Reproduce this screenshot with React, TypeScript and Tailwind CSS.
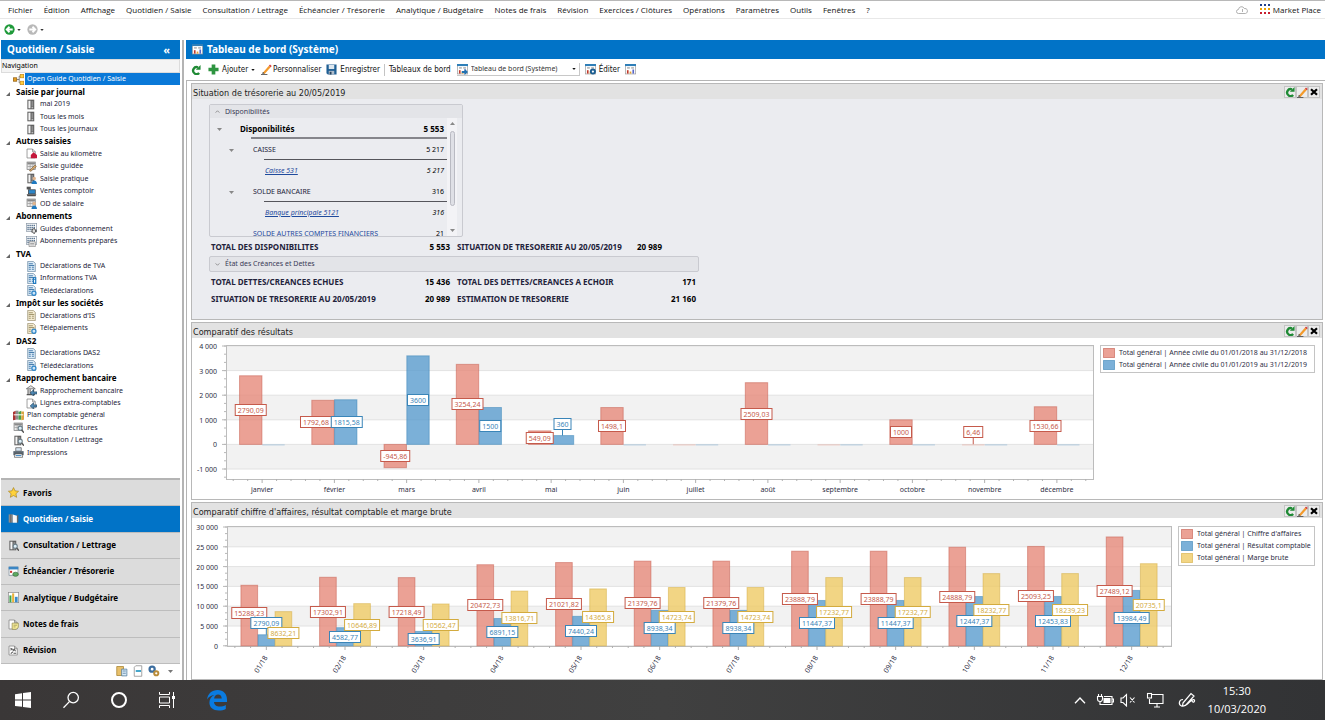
import type { ReactNode } from "react";
import { clsx } from "clsx";

const MENU = [
  "Fichier",
  "Édition",
  "Affichage",
  "Quotidien / Saisie",
  "Consultation / Lettrage",
  "Échéancier / Trésorerie",
  "Analytique / Budgétaire",
  "Notes de frais",
  "Révision",
  "Exercices / Clôtures",
  "Opérations",
  "Paramètres",
  "Outils",
  "Fenêtres",
  "?",
];

type Base = "guide" | "binder" | "page" | "form" | "grid" | "doc" | "docTan" | "bank" | "pc" | "books" | "printer" | "star" | "chart" | "open" | "calendar";
type Badge = "house" | "pencil" | "user" | "gear" | "sheet" | "info" | "sync" | "arrow" | "search" | "note" | "scribble";

type Row = { label: string; kind: "head" | "leaf" | "root"; base?: Base; badge?: Badge; active?: boolean };

const TREE: Row[] = [
  { label: "Open Guide Quotidien / Saisie", kind: "root", base: "guide", active: true },
  { label: "Saisie par journal", kind: "head" },
  { label: "mai 2019", kind: "leaf", base: "binder" },
  { label: "Tous les mois", kind: "leaf", base: "binder" },
  { label: "Tous les journaux", kind: "leaf", base: "binder" },
  { label: "Autres saisies", kind: "head" },
  { label: "Saisie au kilomètre", kind: "leaf", base: "page", badge: "house" },
  { label: "Saisie guidée", kind: "leaf", base: "form", badge: "pencil" },
  { label: "Saisie pratique", kind: "leaf", base: "binder", badge: "user" },
  { label: "Ventes comptoir", kind: "leaf", base: "pc" },
  { label: "OD de salaire", kind: "leaf", base: "form", badge: "user" },
  { label: "Abonnements", kind: "head" },
  { label: "Guides d'abonnement", kind: "leaf", base: "grid", badge: "gear" },
  { label: "Abonnements préparés", kind: "leaf", base: "grid", badge: "sheet" },
  { label: "TVA", kind: "head" },
  { label: "Déclarations de TVA", kind: "leaf", base: "doc" },
  { label: "Informations TVA", kind: "leaf", base: "doc", badge: "info" },
  { label: "Télédéclarations", kind: "leaf", base: "doc", badge: "sync" },
  { label: "Impôt sur les sociétés", kind: "head" },
  { label: "Déclarations d'IS", kind: "leaf", base: "docTan" },
  { label: "Télépaiements", kind: "leaf", base: "docTan", badge: "sync" },
  { label: "DAS2", kind: "head" },
  { label: "Déclarations DAS2", kind: "leaf", base: "doc" },
  { label: "Télédéclarations", kind: "leaf", base: "doc", badge: "sync" },
  { label: "Rapprochement bancaire", kind: "head" },
  { label: "Rapprochement bancaire", kind: "leaf", base: "bank", badge: "arrow" },
  { label: "Lignes extra-comptables", kind: "leaf", base: "page", badge: "arrow" },
  { label: "Plan comptable général", kind: "root", base: "books" },
  { label: "Recherche d'écritures", kind: "root", base: "form", badge: "search" },
  { label: "Consultation / Lettrage", kind: "root", base: "binder", badge: "search" },
  { label: "Impressions", kind: "root", base: "printer" },
];

const MODULES: { label: string; base: Base; badge?: Badge; active?: boolean }[] = [
  { label: "Favoris", base: "star" },
  { label: "Quotidien / Saisie", base: "open", active: true },
  { label: "Consultation / Lettrage", base: "binder", badge: "search" },
  { label: "Échéancier / Trésorerie", base: "calendar" },
  { label: "Analytique / Budgétaire", base: "chart" },
  { label: "Notes de frais", base: "page", badge: "note" },
  { label: "Révision", base: "page", badge: "scribble" },
];

const BASES: Record<Base, ReactNode> = {
  guide: (
    <>
      <path d="M5 8h4M9 3v10M9 3h2M9 13h2" stroke="#555" fill="none" />
      <rect x="0.5" y="5.5" width="5" height="5" fill="#e8a020" stroke="#8a5a10" />
      <rect x="10.5" y="0.5" width="5" height="5" fill="#ffcf3a" stroke="#c98a14" />
      <rect x="10.5" y="10.5" width="5" height="5" fill="#ffcf3a" stroke="#c98a14" />
    </>
  ),
  binder: (
    <>
      <rect x="2" y="1" width="10" height="14" fill="#606060" />
      <rect x="3.5" y="2.5" width="3" height="11" fill="#f4f4f4" />
      <rect x="8" y="3" width="2.5" height="8" fill="#8e8e8e" />
      <rect x="8" y="12" width="2.5" height="1.5" fill="#d5d5d5" />
    </>
  ),
  page: <path d="M1.5 1.5h8l4 4v9h-12zM9.5 1.5v4h4" fill="#fff" stroke="#777" />,
  form: (
    <>
      <rect x="1.5" y="1.5" width="12" height="11" fill="#e9e9e9" stroke="#777" />
      <rect x="2" y="2" width="11" height="3" fill="#8a8a8a" />
      <path d="M2 8h11M6 5v7M10 5v7" stroke="#999" />
    </>
  ),
  grid: (
    <>
      <rect x="0.5" y="0.5" width="15" height="12" fill="#fff" stroke="#8a97a5" />
      <path d="M2 3.5h12M2 6.5h12M2 9.5h12" stroke="#4f6c8a" strokeWidth="2" strokeDasharray="2 1" />
    </>
  ),
  doc: (
    <>
      <path d="M2.5 0.5h8l3 3v12h-11z" fill="#dcebf7" stroke="#5f7f9b" />
      <path d="M4 4h6M4 6.5h8M4 9h3M8.5 9h3M4 12h3M8.5 12h3" stroke="#4a7fae" strokeWidth="1.6" />
    </>
  ),
  docTan: (
    <>
      <path d="M2.5 0.5h8l3 3v12h-11z" fill="#f5ecd2" stroke="#8f8466" />
      <path d="M4 4h6M4 6.5h8M4 9h3M8.5 9h3M4 12h3M8.5 12h3" stroke="#a4976f" strokeWidth="1.6" />
    </>
  ),
  bank: (
    <>
      <path d="M0.5 5.5L7 1l6.5 4.5z" fill="#e4e4e4" stroke="#555" />
      <path d="M3 6v7M6 6v7M11 6v7M1 14h12" stroke="#555" strokeWidth="1.5" />
    </>
  ),
  pc: (
    <>
      <path d="M1 1h6v4H1z" fill="#555" />
      <rect x="3.5" y="5.5" width="10" height="6" fill="#2d86c8" stroke="#3a3a3a" />
      <path d="M1 12h14l-1 3H2z" fill="#4c4c4c" />
    </>
  ),
  books: (
    <>
      <path d="M0 3l4-2v13l-4 1z" fill="#a33" />
      <path d="M4 1h4v13H4z" fill="#8c8c8c" />
      <path d="M8 3l4-2v13H8z" fill="#4aa04a" />
      <path d="M12 2h4v12l-4 1z" fill="#d9a441" />
      <path d="M1 7h14" stroke="#fff" strokeWidth="1.5" />
    </>
  ),
  printer: (
    <>
      <path d="M4 1h8v5H4z" fill="#d7e6f3" stroke="#555" />
      <path d="M0.5 6h15v6h-15z" fill="#5a6670" />
      <path d="M3 10h10l1 5H2z" fill="#fff" stroke="#555" />
      <path d="M4 12.5h8" stroke="#3b86c4" strokeWidth="1.5" />
    </>
  ),
  star: <path d="M8 0.8l2.2 4.8 5.2.6-3.9 3.6 1.1 5.2L8 12.4 3.4 15l1.1-5.2L.6 6.2l5.2-.6z" fill="#ffd23b" stroke="#a88425" />,
  chart: (
    <>
      <rect x="0.5" y="0.5" width="15" height="15" fill="#fff" stroke="#888" />
      <rect x="2" y="5" width="3" height="10" fill="#3fa34d" />
      <rect x="6" y="2" width="3" height="13" fill="#e9b13a" />
      <rect x="10" y="7" width="4" height="8" fill="#3a8ccb" />
    </>
  ),
  open: (
    <>
      <path d="M1 2h6v12H1z" fill="#8b8b8b" />
      <path d="M7 2l6 2v10H7z" fill="#f7f7f7" />
      <path d="M4 2v12" stroke="#555" />
      <path d="M13 3h2v11h-2z" fill="#666" />
    </>
  ),
  calendar: (
    <>
      <rect x="1.5" y="1.5" width="13" height="12" fill="#fff" stroke="#7a8b99" />
      <rect x="1" y="1" width="14" height="4" fill="#3b86c4" />
      <rect x="3" y="7" width="3" height="3" fill="#c33" />
      <ellipse cx="11" cy="12" rx="4" ry="3" fill="#5eaa62" stroke="#3b6e3e" />
    </>
  ),
};

const BADGES: Record<Badge, ReactNode> = {
  house: <path d="M7 15V10l4-4 5 4v5z" fill="#c4183c" />,
  pencil: <path d="M5 14l8-8 2 2-8 7z" fill="#e0b070" stroke="#7a5a35" />,
  user: (
    <>
      <circle cx="12" cy="8" r="2.4" fill="#e0b48c" />
      <path d="M8 16c0-7 8-7 8 0z" fill="#1f7ac0" />
    </>
  ),
  gear: <circle cx="11.5" cy="11.5" r="3" fill="#ddd" stroke="#444" strokeWidth="2" strokeDasharray="2 1" />,
  sheet: <path d="M4.5 8.5h9v7h-9zM6 11h6M6 13h6" fill="#fff" stroke="#777" />,
  info: (
    <>
      <path d="M10 6h5v10h-5z" fill="#1f7ac0" />
      <path d="M12.5 7.5v1.5M12.5 10v4" stroke="#fff" strokeWidth="1.5" />
    </>
  ),
  sync: <circle cx="11.5" cy="12" r="3" fill="#cfe6f8" stroke="#2f86c8" strokeWidth="1.8" />,
  arrow: <path d="M16 10h-5V7l-5 4.5L11 16v-3h5z" fill="#4f89b5" stroke="#2a4d68" />,
  search: (
    <>
      <circle cx="10.5" cy="9" r="3" fill="#dff0f8" stroke="#6d7f89" strokeWidth="1.5" />
      <path d="M12.5 11.5L16 15.5" stroke="#555" strokeWidth="2.2" />
    </>
  ),
  note: (
    <>
      <path d="M6 6h9v6l-3 3H6z" fill="#f6ec9a" stroke="#8d8647" />
      <path d="M8 9h5M8 11.5h3" stroke="#8d8647" />
    </>
  ),
  scribble: <path d="M3.500 4.500l3 1.500-3 1.500M7 9l2-3 2 3M4 12.500l3-2.500M8 12h4" fill="none" stroke="#555" strokeWidth="1.500" />,
};

function Glyph({ base, badge }: { base: Base; badge?: Badge }) {
  return (
    <svg viewBox="0 0 16 16" className="h-[11px] w-[11px] shrink-0" aria-hidden="true">
      {BASES[base]}
      {badge && BADGES[badge]}
    </svg>
  );
}

function Caret({ className = "h-[3px] w-[5px]" }: { className?: string }) {
  return (
    <svg viewBox="0 0 5 3" className={clsx("shrink-0", className)} aria-hidden="true">
      <path d="M0 0h5L2.5 3z" fill="currentColor" />
    </svg>
  );
}

function RefreshIcon() {
  return (
    <svg viewBox="0 0 12 12" className="h-[10px] w-[10px]" aria-hidden="true">
      <path d="M9.8 9.6A4.200 4.200 0 1 1 8.400 2.800" fill="none" stroke="#1f8a35" strokeWidth="2.800" />
      <path d="M5.800 5.800H11.500V0z" fill="#1f8a35" />
    </svg>
  );
}

function PencilIcon() {
  return (
    <svg viewBox="0 0 12 12" className="h-[11px] w-[11px]" aria-hidden="true">
      <path d="M2 9.600L8.600 2l1.900 1.600L3.900 11z" fill="#f39a2b" />
      <path d="M8.600 2l1.200-1.400 1.900 1.600-1.200 1.400z" fill="#d63b3b" />
      <path d="M1.400 11l.6-2.400 1.900 1.600z" fill="#333" />
      <path d="M0 11.500h7" stroke="#555" />
    </svg>
  );
}

function DashIcon({ overlay }: { overlay?: "arrow" | "gear" }) {
  return (
    <svg viewBox="0 0 16 16" className="h-[11px] w-[11px] shrink-0" aria-hidden="true">
      <rect x="0.5" y="0.5" width="15" height="14" fill="#fff" stroke="#9a9a9a" />
      <rect x="0" y="0" width="16" height="3" fill="#2f7fb8" />
      <path d="M3 5.500h4M9 5.500h4" stroke="#bbb" strokeWidth="2.500" />
      <path d="M4 14V9" stroke="#c0392b" strokeWidth="2.400" />
      <path d="M8 14v-3" stroke="#e0a030" strokeWidth="2.400" />
      <path d="M12 14V8" stroke="#5866c8" strokeWidth="2.400" />
      {overlay === "arrow" && <path d="M7 10h4V7l5 4.500-5 4.500v-3H7z" fill="#2372b0" />}
      {overlay === "gear" && <circle cx="11.500" cy="11" r="3" fill="#fff" stroke="#1d5f93" strokeWidth="2.800" />}
    </svg>
  );
}

function MenuBar() {
  return (
    <nav className="flex h-[19px] items-center border-t border-b border-t-[#b8b8b8] border-b-[#e8e8e8] pr-1 pl-2 font-['Open_Sans',sans-serif] text-[8px] leading-3 text-[#111]">
      <ul className="flex flex-1 gap-[11px]">
        {MENU.map((m) => (
          <li key={m}>
            <button className="whitespace-nowrap">{m}</button>
          </li>
        ))}
      </ul>
      <svg viewBox="0 0 24 16" className="mr-3 h-2 w-3" fill="none" stroke="#a8a8a8" strokeWidth="1.8" aria-hidden="true">
        <path d="M5 15a4 4 0 0 1 0-8 6 6 0 0 1 11.5-2A5 5 0 0 1 19 15zM13 6v6" />
      </svg>
      <button className="flex items-center gap-[2px]">
        <svg viewBox="0 0 11 11" className="h-[11px] w-[11px]" aria-hidden="true">
          {["#1f3f8c", "#f0a500", "#c81e2e"].map((c, y) =>
            [0, 4, 8].map((x) => <rect key={x} x={x} y={y * 4} width="2" height="2" fill={c} />),
          )}
        </svg>
        Market Place
      </button>
    </nav>
  );
}

function HistoryBar() {
  return (
    <div className="flex h-[21px] items-center gap-[6px] pl-1">
      {["#1f9a3a", "#b9b9b9"].map((c, i) => (
        <button key={c} className="flex items-center gap-[2px] text-[#333]" aria-label={i ? "Suivant" : "Précédent"}>
          <svg viewBox="0 0 12 12" className="h-[11px] w-[11px]" aria-hidden="true">
            <circle cx="6" cy="6" r="5.6" fill={c} />
            <path d={i ? "M2.5 6h6M6 3l3 3-3 3" : "M9.5 6h-6M6 3L3 6l3 3"} fill="none" stroke="#fff" strokeWidth="2" />
          </svg>
          <Caret className="h-[2px] w-1" />
        </button>
      ))}
    </div>
  );
}

function TreeRow({ row }: { row: Row }) {
  if (row.kind === "head") {
    return (
      <li className="flex flex-1 items-center gap-[6px] pl-[5px] text-[8px] font-bold text-black">
        <svg viewBox="0 0 4 4" className="mt-1 h-1 w-1" aria-hidden="true">
          <path d="M4 0v4H0z" fill="#666" />
        </svg>
        {row.label}
      </li>
    );
  }
  return (
    <li className={clsx("flex flex-1 items-center gap-px", row.kind === "leaf" ? "pl-[25px]" : "pl-3")}>
      <Glyph base={row.base!} badge={row.badge} />
      <a href="#" className={clsx("flex items-center self-stretch pl-[2px]", row.active && "flex-1 bg-[#0a79d8] text-white")}>
        {row.label}
      </a>
    </li>
  );
}

function Sidebar() {
  return (
    <aside className="flex w-[184px] shrink-0 flex-col border-r-2 border-[#b4b4b4] pr-[2px] pl-px">
      <header className="flex h-[19px] items-center justify-between bg-[#0173c7] pr-[10px] pl-[6px] text-[10px] font-bold text-white">
        Quotidien / Saisie
        <button className="text-[11px] leading-3" aria-label="Replier">
          «
        </button>
      </header>
      <div className="flex h-[14px] items-center border border-[#dcdcdc] bg-[#f4f4f4] text-[7px]">Navigation</div>
      <ul className="flex h-[386px] flex-col text-[7px] leading-3 whitespace-nowrap text-[#1c1c38]">
        {TREE.map((r, i) => (
          <TreeRow key={i} row={r} />
        ))}
      </ul>
      <div className="flex-1" />
      <ul className="grid h-[186px] grid-rows-7 border-t-2 border-[#b4b4b4] text-[8px] font-bold">
        {MODULES.map((m) => (
          <li key={m.label} className={clsx("border-b border-[#bdbdbd]", m.active ? "bg-[#0173c7] text-white" : "bg-[#dcdcdc] text-black")}>
            <button className="flex h-full w-full items-center gap-1 pl-[7px]">
              <Glyph base={m.base} badge={m.badge} />
              {m.label}
            </button>
          </li>
        ))}
      </ul>
      <div className="flex h-4 items-center justify-end gap-1 pr-[7px] pb-[2px] text-[#777]">
        <button aria-label="Classeur">
          <svg viewBox="0 0 16 16" className="h-3 w-3" aria-hidden="true">
            <path d="M1 2h9v12H1z" fill="#e8c06a" stroke="#a5812f" />
            <path d="M7.5 5.5h7v9h-7z" fill="#d9ebf8" stroke="#4d7899" />
            <path d="M9 8h4M9 11h4" stroke="#4d7899" />
          </svg>
        </button>
        <button aria-label="Document">
          <svg viewBox="0 0 16 16" className="h-3 w-3" aria-hidden="true">
            <path d="M5 1h8v14H3V3z" fill="#fff" stroke="#888" />
            <path d="M5 8h7" stroke="#39a0c8" strokeWidth="2.5" />
          </svg>
        </button>
        <button aria-label="Réglages">
          <svg viewBox="0 0 16 16" className="h-3 w-3" aria-hidden="true">
            <circle cx="5.5" cy="5.5" r="3.4" fill="#fff" stroke="#3c6ea0" strokeWidth="3" />
            <circle cx="11" cy="11" r="2.8" fill="#fff" stroke="#b98c3a" strokeWidth="2.6" />
          </svg>
        </button>
        <Caret className="ml-1 h-[3px] w-[5px]" />
      </div>
    </aside>
  );
}

function Toolbar() {
  return (
    <div className="flex h-[22px] items-center border-b border-[#b4b4b4] pl-[5px] font-['DejaVu_Sans_Condensed',sans-serif] text-[8px] whitespace-nowrap text-[#111]">
      <button aria-label="Actualiser" className="mr-[7px]">
        <RefreshIcon />
      </button>
      <button className="mr-[6px] flex items-center gap-[3px]">
        <svg viewBox="0 0 12 12" className="h-[11px] w-[11px]" aria-hidden="true">
          <path d="M4 0.5h4V4h3.5v4H8v3.5H4V8H.5V4H4z" fill="#2e9440" />
        </svg>
        Ajouter
        <Caret className="h-[2px] w-1" />
      </button>
      <button className="mr-[5px] flex items-center gap-px">
        <PencilIcon />
        Personnaliser
      </button>
      <button className="flex items-center gap-[3px]">
        <svg viewBox="0 0 12 12" className="h-[11px] w-[11px]" aria-hidden="true">
          <path d="M.5.5h11v11H2L.5 10z" fill="#1f5f94" />
          <rect x="3" y="1" width="6" height="4.5" fill="#dfe8ef" />
          <rect x="3" y="7.5" width="6" height="4" fill="#aebccb" />
          <rect x="4" y="8.5" width="2" height="3" fill="#26425c" />
        </svg>
        Enregistrer
      </button>
      <span className="mx-1 h-3 w-px bg-[#c4c4c4]" />
      <label htmlFor="board">Tableaux de bord</label>
      <div className="relative ml-[6px] flex h-[13px] items-center border-r border-b border-[#c8c8c8]">
        <DashIcon overlay="arrow" />
        <select id="board" className="w-[111px] appearance-none bg-transparent pl-[3px] font-['Noto_Sans',sans-serif] text-[7px] text-[#333]">
          <option>Tableau de bord (Système)</option>
        </select>
        <Caret className="pointer-events-none absolute right-[3px] h-[2px] w-1" />
      </div>
      <button className="ml-[5px] flex items-center gap-[3px]">
        <DashIcon overlay="gear" />
        Éditer
      </button>
      <button aria-label="Aperçu" className="ml-[5px]">
        <DashIcon />
      </button>
    </div>
  );
}

function Panel({ title, className, children }: { title: string; className?: string; children: ReactNode }) {
  return (
    <section className={clsx("flex flex-col border border-[#b8b8b8]", className)}>
      <header className="flex h-[15px] shrink-0 items-center justify-between bg-[#e2e2e2] pr-[2px] pl-px">
        <h2 className="mt-[2px] font-['DejaVu_Sans_Condensed',sans-serif] text-[9px] leading-3 text-[#222]">{title}</h2>
        <div className="flex">
          {[
            ["Actualiser", <RefreshIcon key="r" />],
            ["Modifier", <PencilIcon key="p" />],
            [
              "Fermer",
              <svg key="c" viewBox="0 0 8 8" className="h-2 w-2" aria-hidden="true">
                <path d="M1 1.2l6 5.6M7 1.2L1 6.8" stroke="#000" strokeWidth="2.2" />
              </svg>,
            ],
          ].map(([label, icon]) => (
            <button key={label as string} aria-label={label as string} className="grid h-3 w-3 place-items-center border border-[#c4c4c4] bg-[#ececec]">
              {icon}
            </button>
          ))}
        </div>
      </header>
      {children}
    </section>
  );
}

const ACCOUNTS = [
  { label: "Disponibilités", amount: "5 553", cls: "font-bold text-[8px] text-black pl-[30px]", caret: "left-[7px]", line: "left-[41px] border-b-2 border-[#85858b]" },
  { label: "CAISSE", amount: "5 217", cls: "pl-[43px]", caret: "left-[19px]", line: "left-[54px] border-b border-[#55555b]" },
  { label: "Caisse 531", amount: "5 217", cls: "italic pl-[55px]", link: true },
  { label: "SOLDE BANCAIRE", amount: "316", cls: "pl-[43px]", caret: "left-[19px]", line: "left-[54px] border-b border-[#55555b]" },
  { label: "Banque principale 5121", amount: "316", cls: "italic pl-[55px]", link: true },
  { label: "SOLDE AUTRES COMPTES FINANCIERS", amount: "21", cls: "pl-[43px] text-[#1f4a9c]" },
];

function Treasury() {
  return (
    <div className="flex-1 bg-[#ebecf0] pt-[5px] pl-[17px] text-[7px] leading-3 text-[#22223a]">
      <div className="w-[254px] rounded-xs border border-[#c9cad0]">
        <button className="flex h-[13px] w-full items-center gap-[5px] bg-[#e3e4e8] px-[5px] text-[#3a3a56]">
          <svg viewBox="0 0 6 4" className="h-[3px] w-[5px]" fill="none" stroke="#777" aria-hidden="true">
            <path d="M0.5 3.5L3 1l2.5 2.5" />
          </svg>
          Disponibilités
        </button>
        <div className="flex h-[118px] overflow-hidden">
          <table className="w-[237px] shrink-0 self-start">
            <tbody>
              {ACCOUNTS.map((a) => (
                <tr key={a.label} className="relative h-[21px]">
                  <td className={clsx("p-0 align-middle", a.cls)}>
                    {a.caret && <Caret className={clsx("absolute top-[10px] h-[3px] w-[5px] text-[#888]", a.caret)} />}
                    {a.link ? (
                      <a href="#" className="text-[#1f4a9c] underline">
                        {a.label}
                      </a>
                    ) : (
                      a.label
                    )}
                    {a.line && <span className={clsx("absolute right-0 bottom-0", a.line)} />}
                  </td>
                  <td className={clsx("p-0 pr-[3px] text-right align-middle text-black", a.cls.includes("italic") && "italic", a.cls.includes("bold") && "text-[8px] font-bold")}>
                    {a.amount}
                  </td>
                </tr>
              ))}
            </tbody>
          </table>
          <div className="flex w-[10px] flex-col items-center bg-[#f3f3f6] py-1 text-[#888]">
            <Caret className="h-[3px] w-[5px] rotate-180" />
            <span className="mt-[6px] h-[75px] w-[5px] rounded-full border border-[#b9bac2] bg-[#dfe0e6]" />
            <Caret className="mt-auto h-[3px] w-[5px]" />
          </div>
        </div>
      </div>
      <div className="grid grid-cols-[239px_205px] gap-x-[7px] pt-1 pl-[2px] text-[8px] font-bold">
        <Total label="TOTAL DES DISPONIBILITES" value="5 553" />
        <Total label="SITUATION DE TRESORERIE AU 20/05/2019" value="20 989" />
      </div>
      <button className="mt-[3px] flex h-4 w-[490px] items-center gap-[5px] rounded-xs border border-[#c9cad0] bg-[#e3e4e8] px-[5px] text-[#3a3a56]">
        <svg viewBox="0 0 6 4" className="h-[3px] w-[5px]" fill="none" stroke="#777" aria-hidden="true">
          <path d="M0.5 0.5L3 3l2.5-2.5" />
        </svg>
        État des Créances et Dettes
      </button>
      <div className="grid grid-cols-[239px_239px] gap-x-[7px] gap-y-[5px] pt-1 pl-[2px] text-[8px] font-bold">
        <Total label="TOTAL DETTES/CREANCES ECHUES" value="15 436" />
        <Total label="TOTAL DES DETTES/CREANCES A ECHOIR" value="171" />
        <Total label="SITUATION DE TRESORERIE AU 20/05/2019" value="20 989" />
        <Total label="ESTIMATION DE TRESORERIE" value="21 160" />
      </div>
    </div>
  );
}

function Total({ label, value }: { label: string; value: string }) {
  return (
    <p className="flex justify-between whitespace-nowrap">
      <span>{label}</span>
      <span className="text-black">{value}</span>
    </p>
  );
}

const COLORS = {
  red: { fill: "#e6897b", edge: "#c55a4b" },
  blue: { fill: "#5a9cce", edge: "#3a85b8" },
  yellow: { fill: "#efca65", edge: "#d3ab3f" },
};
type Color = keyof typeof COLORS;

type Bar = { value: number; color: Color; dx?: number; dy?: number; stem?: boolean };
type Group = { name: string; bars: Bar[] };

const b = (value: number, color: Color, extra: Partial<Bar> = {}): Bar => ({ value, color, ...extra });

const RESULTS: Group[] = [
  { name: "janvier", bars: [b(2790.09, "red"), b(0, "blue")] },
  { name: "février", bars: [b(1792.68, "red", { dx: -7 }), b(1815.58, "blue", { dx: 1 })] },
  { name: "mars", bars: [b(-945.86, "red"), b(3600, "blue")] },
  { name: "avril", bars: [b(3254.24, "red"), b(1500, "blue")] },
  { name: "mai", bars: [b(549.09, "red"), b(360, "blue", { dy: -16, stem: true })] },
  { name: "juin", bars: [b(1498.1, "red"), b(0, "blue")] },
  { name: "juillet", bars: [b(0, "red"), b(0, "blue")] },
  { name: "août", bars: [b(2509.03, "red"), b(0, "blue")] },
  { name: "septembre", bars: [b(0, "red"), b(0, "blue")] },
  { name: "octobre", bars: [b(1000, "red"), b(0, "blue")] },
  { name: "novembre", bars: [b(6.46, "red", { dy: -12, stem: true }), b(0, "blue")] },
  { name: "décembre", bars: [b(1530.66, "red"), b(0, "blue")] },
];

const MARGINS: Group[] = (
  [
    [15288.23, 2790.09, 8632.21],
    [17302.91, 4582.77, 10646.89],
    [17218.49, 3636.91, 10562.47],
    [20472.73, 6891.15, 13816.71],
    [21021.82, 7440.24, 14365.8],
    [21379.76, 8938.34, 14723.74],
    [21379.76, 8938.34, 14723.74],
    [23888.79, 11447.37, 17232.77],
    [23888.79, 11447.37, 17232.77],
    [24888.79, 12447.37, 18232.77],
    [25093.25, 12453.83, 18239.23],
    [27489.12, 13984.49, 20735.1],
  ] as const
).map(([r, bl, y], i) => ({
  name: `${String(i + 1).padStart(2, "0")}/18`,
  bars: [
    b(r, "red", i ? {} : { dy: -3 }),
    b(bl, "blue", i ? {} : { dy: -17, stem: true }),
    b(y, "yellow", i ? {} : { dy: 4 }),
  ],
}));

const spaced = (n: number) => String(n).replace(/(\d)(\d{3})$/, "$1 $2");

function labelWidth(s: string) {
  return [...s].reduce((w, c) => w + (c === "," || c === "-" ? 2 : 4), 5);
}

type ChartProps = {
  groups: Group[];
  ticks: number[];
  height: number;
  top: number;
  unit: number; // pixels for one step between ticks
  barWidth: number;
  tilted?: boolean;
};

function BarChart({ groups, ticks, height, top, unit, barWidth, tilted }: ChartProps) {
  const step = ticks[0] - ticks[1];
  const y = (v: number) => top + ((ticks[0] - v) * unit) / step;
  const slot = 100 / groups.length;
  const centre = (gi: number, bi: number, n: number) => slot * (gi + 0.5 + (bi - (n - 1) / 2) * (barWidth + 0.005));
  const thirds = Array.from({ length: Math.floor(((height - top) / unit) * 3) + 1 }, (_, i) => top + (i * unit) / 3);

  return (
    <svg className="min-w-0 flex-1 overflow-visible font-['Noto_Sans',sans-serif] text-[7px]" height={height} role="img">
      <rect width="100%" height={height} fill="#fff" />
      {ticks.map((t, i) => (
        <g key={t}>
          {i % 2 === 0 && <rect y={y(t)} width="100%" height={Math.min(unit, height - y(t))} fill="#f2f2f2" />}
          <line x1="0" x2="100%" y1={y(t)} y2={y(t)} stroke="#e2e2e2" />
          <line x1="-4" x2="0" y1={y(t)} y2={y(t)} stroke="#b8b8b8" />
          <text x="-9" y={y(t) + 3} textAnchor="end" fill="#2e2e44">
            {spaced(t)}
          </text>
        </g>
      ))}
      {thirds.map((t) => (
        <line key={t} x1="-2" x2="0" y1={t} y2={t} stroke="#b8b8b8" />
      ))}
      <rect width="100%" height={height} fill="none" stroke="#bcbcbc" shapeRendering="crispEdges" />
      {groups.map((g, gi) => (
        <g key={g.name}>
          {[-0.4, -0.2, 0, 0.2, 0.4].map((d) => (
            <line
              key={d}
              x1={`${slot * (gi + 0.5 + d)}%`}
              x2={`${slot * (gi + 0.5 + d)}%`}
              y1={height}
              y2={height + (d ? 2 : 4)}
              stroke="#b0b0b0"
            />
          ))}
          {g.bars.map((bar, bi) => {
            const flat = Math.abs(bar.value) < 10;
            return (
              <rect
                key={bi}
                x={`${centre(gi, bi, g.bars.length) - (slot * barWidth) / 2}%`}
                width={`${slot * barWidth}%`}
                y={flat ? y(0) : y(Math.max(bar.value, 0))}
                height={flat ? 1 : Math.abs(y(bar.value) - y(0))}
                fill={COLORS[bar.color].fill}
                fillOpacity={flat ? 0.4 : 0.8}
                stroke={flat ? "none" : COLORS[bar.color].edge}
                strokeOpacity="0.5"
              />
            );
          })}
          <svg x={`${slot * (gi + 0.5)}%`} overflow="visible">
            {tilted ? (
              <text transform={`translate(-6 ${height + 18}) rotate(-58)`} y="3" textAnchor="middle" fill="#2e2e44">
                {g.name}
              </text>
            ) : (
              <text y={height + 13} textAnchor="middle" fill="#2e2e44">
                {g.name}
              </text>
            )}
          </svg>
        </g>
      ))}
      {groups.flatMap((g, gi) =>
        g.bars.map((bar, bi) => {
          if (!bar.value) return null;
          const text = String(bar.value).replace(".", ",");
          const w = labelWidth(text);
          const mid = Math.round((y(bar.value) + y(0)) / 2 + (bar.dy ?? 0));
          const { edge } = COLORS[bar.color];
          return (
            <svg key={`${gi}-${bi}`} x={`${centre(gi, bi, g.bars.length)}%`} overflow="visible">
              <g transform={`translate(${bar.dx ?? 0} 0)`}>
                {bar.stem && <line y1={mid} y2={y(bar.value)} stroke={edge} />}
                <rect x={-w / 2} y={mid - 5.5} width={w} height="11" fill="#fff" stroke={edge} />
                <text y={mid + 3} textAnchor="middle" fill={edge}>
                  {text}
                </text>
              </g>
            </svg>
          );
        }),
      )}
    </svg>
  );
}

function Legend({ items, className }: { items: [Color, string][]; className: string }) {
  return (
    <ul className={clsx("shrink-0 self-start border border-[#c4c4c4] py-px pl-[2px] text-[7px] whitespace-nowrap text-[#2e2e44]", className)}>
      {items.map(([color, label]) => (
        <li key={label} className="flex flex-1 items-center gap-1">
          <svg className="h-[10px] w-3" aria-hidden="true">
            <rect x="0.5" y="0.5" width="11" height="9" fill={COLORS[color].fill} fillOpacity="0.8" stroke={COLORS[color].edge} strokeOpacity="0.6" />
          </svg>
          {label}
        </li>
      ))}
    </ul>
  );
}

function Dashboard() {
  return (
    <main className="flex min-w-0 flex-1 flex-col pl-[2px]">
      <h1 className="flex h-[19px] shrink-0 items-center gap-1 bg-[#0173c7] pl-[6px] text-[10px] font-bold text-white">
        <DashIcon />
        Tableau de bord (Système)
      </h1>
      <Toolbar />
      <div className="flex min-h-0 flex-1 flex-col gap-[2px] border-l border-[#b4b4b4] pt-[2px] pr-[2px] pl-1">
        <Panel title="Situation de trésorerie au 20/05/2019" className="h-[237px] shrink-0">
          <Treasury />
        </Panel>
        <Panel title="Comparatif des résultats" className="h-[178px] shrink-0">
          <div className="flex gap-[7px] pt-[7px] pr-[7px] pl-[34px]">
            <BarChart groups={RESULTS} ticks={[4000, 3000, 2000, 1000, 0, -1000]} height={134} top={1} unit={24.6} barWidth={0.31} />
            <Legend
              className="flex h-[28px] w-[215px] flex-col"
              items={[
                ["red", "Total général | Année civile du 01/01/2018 au 31/12/2018"],
                ["blue", "Total général | Année civile du 01/01/2019 au 31/12/2019"],
              ]}
            />
          </div>
        </Panel>
        <Panel title="Comparatif chiffre d'affaires, résultat comptable et marge brute" className="min-h-0 flex-1">
          <div className="flex gap-[7px] pt-[8px] pr-[7px] pl-[35px]">
            <BarChart groups={MARGINS} ticks={[30000, 25000, 20000, 15000, 10000, 5000, 0]} height={120} top={1} unit={19.8} barWidth={0.212} tilted />
            <Legend
              className="flex h-10 w-[137px] flex-col"
              items={[
                ["red", "Total général | Chiffre d'affaires"],
                ["blue", "Total général | Résultat comptable"],
                ["yellow", "Total général | Marge brute"],
              ]}
            />
          </div>
        </Panel>
      </div>
    </main>
  );
}

function Taskbar() {
  return (
    <footer className="flex h-10 shrink-0 items-center bg-linear-to-r from-[#3a3737] via-[#404040] to-[#323335] pl-[14px] font-['Open_Sans',sans-serif] text-[11px] text-white">
      <div className="flex flex-1 items-center gap-[30px]">
        <button aria-label="Démarrer">
          <svg viewBox="0 0 18 18" className="h-[18px] w-[18px]" fill="#fff" aria-hidden="true">
            <path d="M1 3.2L8 2.2V8.6H1zM9 2.1L17 1V8.6H9zM1 9.5H8V15.8L1 14.9zM9 9.5H17V17L9 15.9z" />
          </svg>
        </button>
        <button aria-label="Rechercher">
          <svg viewBox="0 0 18 18" className="h-[18px] w-[18px]" fill="none" stroke="#fff" strokeWidth="1.3" aria-hidden="true">
            <circle cx="11.2" cy="6.6" r="5.2" />
            <path d="M7.4 10.6L1.5 16.8" />
          </svg>
        </button>
        <button aria-label="Cortana">
          <svg viewBox="0 0 18 18" className="h-[18px] w-[18px]" fill="none" stroke="#fff" strokeWidth="2" aria-hidden="true">
            <circle cx="9" cy="9" r="7" />
          </svg>
        </button>
        <button aria-label="Affichage des tâches">
          <svg viewBox="0 0 18 18" className="h-[18px] w-[18px]" fill="none" stroke="#fff" aria-hidden="true">
            <path d="M1.5 1v2.5h10V1M1.5 17v-2.5h10V17M1.5 6h10v6h-10zM15.5 1v16" />
            <rect x="14" y="5" width="3" height="3" fill="#fff" stroke="none" />
          </svg>
        </button>
        <button aria-label="Edge">
          <svg viewBox="0 0 22 22" className="h-[22px] w-[22px]" fill="#0a7be0" aria-hidden="true">
            <path d="M1 10.5C1.8 4.6 5.8 1 11.6 1 17.4 1 21 5 21 10.6V13H8c.2 3.200 2.700 4.600 5.800 4.600 2.200 0 4.200-.6 6-1.700V20c-2 1-4.300 1.600-6.900 1.600C7 21.600 3.400 18.400 3.400 13.600c0-3.400 1.900-6.300 5-7.600C5 6.200 2.500 8 1 10.500zM8.100 9.600h7.600C15.600 7 14.300 5.500 12.100 5.500 10 5.500 8.500 7 8.100 9.600z" />
          </svg>
        </button>
      </div>
      <div className="flex items-center gap-[6px]">
        <svg viewBox="0 0 12 7" className="mr-1 h-[7px] w-3" fill="none" stroke="#fff" strokeWidth="1.3" aria-hidden="true">
          <path d="M1 6.300L6 1l5 5.300" />
        </svg>
        <svg viewBox="0 0 18 14" className="h-[14px] w-[18px]" fill="none" stroke="#fff" strokeWidth="1.100" aria-hidden="true">
          <path d="M2.500 1v2M5.500 1v2M1.500 3.500h5v2.500a2.500 2.500 0 0 1-5 0zM4 8.500v3h1.500M8 3.500h8v8H5.500M16 6h1.500v3H16" />
          <rect x="7.500" y="5" width="7" height="5" fill="#fff" stroke="none" />
        </svg>
        <svg viewBox="0 0 16 14" className="h-[14px] w-4" fill="none" stroke="#fff" strokeWidth="1.100" aria-hidden="true">
          <path d="M1 5v4.500h2L6.500 13V1.500L3 5zM10 4.500l4.500 5M14.500 4.500l-4.500 5" />
        </svg>
        <svg viewBox="0 0 18 16" className="mx-1 h-4 w-[18px]" fill="none" stroke="#fff" strokeWidth="1.100" aria-hidden="true">
          <path d="M6 2.500h11v9H3.500V7M11 11.500V15M8 15h6" />
          <rect x="1.500" y="1.500" width="4" height="4.500" />
        </svg>
        <svg viewBox="0 0 18 16" className="ml-1 h-4 w-[18px]" fill="none" stroke="#fff" strokeWidth="1.200" aria-hidden="true">
          <path d="M5 11L13 1.500l3 2.500-8.500 9.500-3 .5zM5 7.500c-4 0-5 5-1.500 6.500 2.500 1 5-1 8-4s5.500-3 5-1-2.500 1-2.500-.5" />
        </svg>
      </div>
      <div className="mr-[59px] ml-[12px] flex flex-col items-center leading-[18px]">
        <span>15:30</span>
        <span>10/03/2020</span>
      </div>
    </footer>
  );
}

export default function App() {
  return (
    <div className="flex h-screen flex-col overflow-hidden bg-white font-['Noto_Sans',sans-serif]">
      <MenuBar />
      <HistoryBar />
      <div className="flex min-h-0 flex-1">
        <Sidebar />
        <Dashboard />
      </div>
      <Taskbar />
    </div>
  );
}
